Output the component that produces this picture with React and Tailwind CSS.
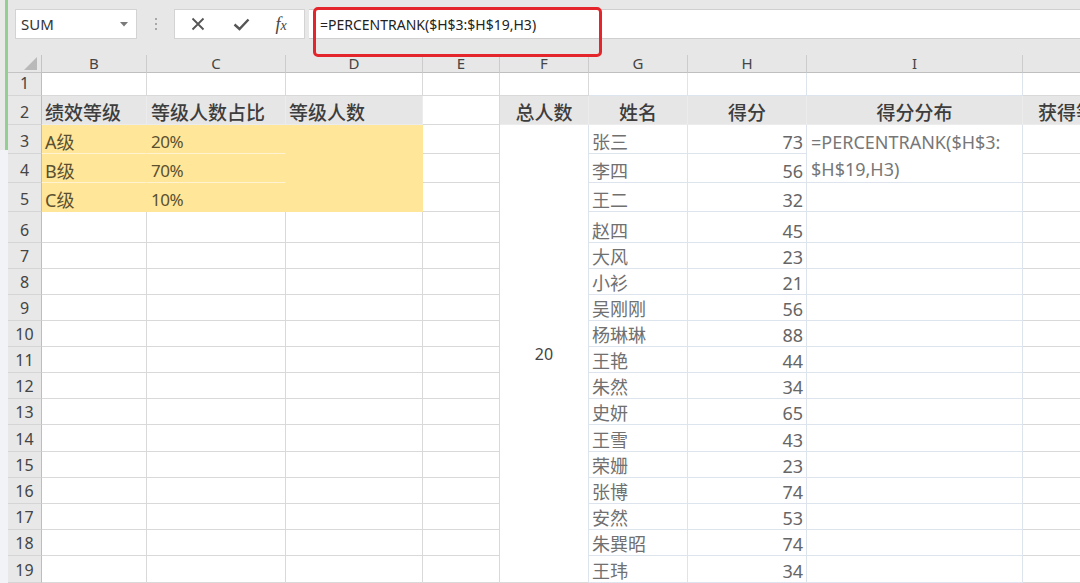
import React from "react";

const COLS = [
  { l: "B", w: "w-[105px]" },
  { l: "C", w: "w-[139px]" },
  { l: "D", w: "w-[137px]" },
  { l: "E", w: "w-[77px]" },
  { l: "F", w: "w-[89px]" },
  { l: "G", w: "w-[99px]" },
  { l: "H", w: "w-[119px]" },
  { l: "I", w: "w-[216px]" },
  { l: "J", w: "w-[130px]" },
];

const SCORES = [
  ["张三", 73],
  ["李四", 56],
  ["王二", 32],
  ["赵四", 45],
  ["大风", 23],
  ["小衫", 21],
  ["吴刚刚", 56],
  ["杨琳琳", 88],
  ["王艳", 44],
  ["朱然", 34],
  ["史妍", 65],
  ["王雪", 43],
  ["荣姗", 23],
  ["张博", 74],
  ["安然", 53],
  ["朱巽昭", 74],
  ["王玮", 34],
];

const LEVELS = [
  ["A级", "20%"],
  ["B级", "70%"],
  ["C级", "10%"],
];

const plain = "border-r border-b border-[#d9d9d9] bg-white";
const blue = "border-r border-b border-[#dde4ee] bg-white";
const gray = "bg-[#e7e6e6] border-r border-b border-[#ececec] flex items-center pt-[5px] text-[19px] leading-[24px] text-[#3d3d3d] font-medium whitespace-nowrap";

function Toolbar() {
  return (
    <div className="h-[49px] bg-[#e7e7e7] flex items-start pt-[9px]">
      {/* name box */}
      <div className="ml-[7px] w-[122px] h-[30px] bg-white border border-[#d3d3d3] flex items-center pl-[5px] pr-[8px]">
        <span className="text-[15px] text-[#333] flex-1">SUM</span>
        <svg width="8" height="5" viewBox="0 0 8 5">
          <path d="M0 0h8L4 4.5z" fill="#7a7a7a" />
        </svg>
      </div>
      <div className="w-[37px] h-[30px] flex flex-col items-center justify-center gap-[3px]">
        <span className="w-[2px] h-[2px] bg-[#a8a8a8]" />
        <span className="w-[2px] h-[2px] bg-[#a8a8a8]" />
        <span className="w-[2px] h-[2px] bg-[#a8a8a8]" />
      </div>
      {/* cancel / enter / fx */}
      <div className="w-[131px] h-[30px] bg-white border border-[#d3d3d3] flex items-center">
        <div className="w-[46px] flex justify-center">
          <svg width="14" height="14" viewBox="0 0 14 14">
            <path d="M1.5 1.5l11 11M12.5 1.5l-11 11" stroke="#555" strokeWidth="1.8" />
          </svg>
        </div>
        <div className="w-[40px] flex justify-center">
          <svg width="17" height="13" viewBox="0 0 17 13">
            <path d="M1.5 6.5l5 4.5 9-9.5" stroke="#555" strokeWidth="2.4" fill="none" />
          </svg>
        </div>
        <div className="w-[40px] flex justify-center">
          <span className="font-['Liberation_Serif',serif] italic text-[18px] text-[#444]">
            f<span className="text-[14px]">x</span>
          </span>
        </div>
      </div>
      <div className="ml-[4px] flex-1 h-[30px] bg-white border-t border-b border-[#cfcfcf] flex items-center pl-[11px]">
        <span className="text-[14px] text-[#222]">=PERCENTRANK($H$3:$H$19,H3)</span>
      </div>
    </div>
  );
}

function HeaderRow() {
  return (
    <div className="h-[24px] bg-[#e7e7e7] flex items-end">
      <div className="w-[34px] h-[18px] border-r border-b border-[#c4c4c4] flex items-end justify-end pr-[4px] pb-[2px] shrink-0">
        <svg width="13" height="13" viewBox="0 0 13 13">
          <path d="M13 0v13H0z" fill="#b9b9b9" />
        </svg>
      </div>
      {COLS.map((c) => (
        <div
          key={c.l}
          className={`${c.w} shrink-0 h-[18px] border-r border-b border-r-[#cccccc] border-b-[#bfbfbf] flex items-center justify-center text-[15px] leading-none text-[#454545]`}
        >
          {c.l}
        </div>
      ))}
    </div>
  );
}

function RowHead({ n }) {
  return (
    <div className="bg-[#e8e8e8] border-r border-r-[#bdbdbd] border-b border-b-[#d5d5d5] flex items-end justify-center pb-[1px] text-[16px] leading-[22px] text-[#444]">
      {n}
    </div>
  );
}

function buildRows() {
  const cells = [];
  for (let r = 1; r <= 19; r++) {
    cells.push(<RowHead key={`h${r}`} n={r} />);
    if (r === 1) {
      COLS.forEach((c) => cells.push(<div key={`1${c.l}`} className={c.l === "G" || c.l === "H" || c.l === "I" ? blue : plain} />));
      continue;
    }
    if (r === 2) {
      cells.push(<div key="B2" className={`${gray} pl-[3px]`}>绩效等级</div>);
      cells.push(<div key="C2" className={`${gray} pl-[4px]`}>等级人数占比</div>);
      cells.push(<div key="D2" className={`${gray} pl-[3px]`}>等级人数</div>);
      cells.push(<div key="E2" className={plain} />);
      cells.push(<div key="F2" className={`${gray} justify-center`}>总人数</div>);
      cells.push(<div key="G2" className={`${gray} justify-center`}>姓名</div>);
      cells.push(<div key="H2" className={`${gray} justify-center`}>得分</div>);
      cells.push(<div key="I2" className={`${gray} justify-center`}>得分分布</div>);
      cells.push(<div key="J2" className={`${gray} pl-[15px]`}>获得等级</div>);
      continue;
    }
    const [name, score] = SCORES[r - 3];
    // B, C, D
    if (r <= 5) {
      const [lv, pct] = LEVELS[r - 3];
      const sep = r < 5 ? "border-b-[#fff3d2]" : "border-b-[#ffe699]";
      cells.push(
        <div key={`B${r}`} className={`bg-[#ffe699] border-r border-r-[#ffe699] border-b ${sep} flex items-end pl-[3px] text-[18px] leading-[22px] text-[#5a5030]`}>
          {lv}
        </div>
      );
      cells.push(
        <div key={`C${r}`} className={`bg-[#ffe699] border-r border-r-[#ffe699] border-b ${sep} flex items-end pl-[4px] text-[17px] leading-[22px] text-[#5a5030] tracking-[-0.5px]`}>
          {pct}
        </div>
      );
      if (r === 3) {
        cells.push(<div key="D3" className="row-span-3 bg-[#ffe699] border-r border-b border-[#ffe699]" />);
      }
    } else {
      cells.push(<div key={`B${r}`} className={plain} />);
      cells.push(<div key={`C${r}`} className={plain} />);
      cells.push(<div key={`D${r}`} className={plain} />);
    }
    // E
    cells.push(<div key={`E${r}`} className={plain} />);
    // F merged
    if (r === 3) {
      cells.push(
        <div key="F3" className="row-span-17 bg-white border-r border-r-[#dde4ee] border-b border-b-[#d9d9d9] flex items-center justify-center text-[16px] text-[#444]">
          20
        </div>
      );
    }
    // G, H
    cells.push(
      <div key={`G${r}`} className={`${blue} flex items-end pl-[3px] text-[18px] leading-[22px] text-[#707070] whitespace-nowrap`}>
        {name}
      </div>
    );
    cells.push(
      <div key={`H${r}`} className={`${blue} flex items-end justify-end pr-[3px] text-[18px] leading-[22px] text-[#666]`}>
        {score}
      </div>
    );
    // I
    if (r === 3) {
      cells.push(
        <div key="I3" className={`row-span-2 ${blue} pl-[4px] pt-[4px] text-[18px] leading-[27px] text-[#777] whitespace-nowrap`}>
          <div>=PERCENTRANK($H$3:</div>
          <div>$H$19,H3)</div>
        </div>
      );
    } else if (r !== 4) {
      cells.push(<div key={`I${r}`} className={blue} />);
    }
    // J
    cells.push(<div key={`J${r}`} className={plain} />);
  }
  return cells;
}

export default function App() {
  return (
    <div className="relative w-[1080px] h-[583px] overflow-hidden flex bg-white font-['Noto_Sans','Noto_Sans_CJK_SC',sans-serif]">
      <div className="w-[8px] shrink-0 flex flex-col bg-[#f1f3f6]">
        <div className="h-[150px] bg-[#93cf93] border-l-[5px] border-l-[#e9e9e9]" />
      </div>
      <div className="flex-1 min-w-0 flex flex-col">
        <Toolbar />
        <HeaderRow />
        <div className="grid grid-cols-[34px_105px_139px_137px_77px_89px_99px_119px_216px_130px] grid-rows-[23px_29px_29px_29px_29px_31px_26px_26px_26px_26px_26px_26px_26px_27px_26px_26px_26px_26px_27px]">
          {buildRows()}
        </div>
      </div>
      <div className="absolute left-[313px] top-[7px] w-[289px] h-[50px] border-[3px] border-[#e4262c] rounded-[5px]" />
    </div>
  );
}
